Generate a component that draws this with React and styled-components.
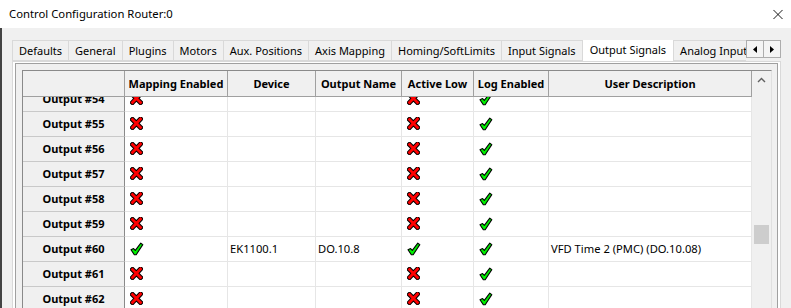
import React from 'react';
import styled, { createGlobalStyle } from 'styled-components';

const Global = createGlobalStyle`
  html, body { margin: 0; padding: 0; background: #f0f0f0; }
  body {
    font-family: "Noto Sans", "Segoe UI", sans-serif;
    font-size: 11px;
    color: #000;
    overflow: hidden;
  }
  * { box-sizing: border-box; }
`;

const Window = styled.div`
  width: 791px;
  height: 308px;
  overflow: hidden;
  background: #f0f0f0;
  display: flex;
  flex-direction: column;
`;

const TitleBar = styled.div`
  height: 28px;
  flex: 0 0 28px;
  background: #fff;
  display: flex;
  align-items: center;
  justify-content: space-between;
  padding: 0 8px 2px 9px;
  font-size: 11.3px;
`;

const CloseBtn = styled.div`
  width: 10px;
  height: 10px;
  margin-top: 2px;
  display: flex;
`;

const Body = styled.div`
  flex: 1;
  position: relative;
  border-left: 2px solid #444;
  padding-top: 12px;
  display: flex;
  flex-direction: column;
`;

const TabStrip = styled.div`
  position: relative;
  z-index: 1;
  height: 21px;
  width: 744px;
  overflow: hidden;
  display: flex;
  align-items: flex-end;
  padding-left: 11px;
`;

const Tab = styled.div`
  flex: 0 0 auto;
  height: ${p => (p.$active ? 24 : 21)}px;
  margin-bottom: ${p => (p.$active ? -1 : 0)}px;
  margin-left: -1px;
  padding: ${p => (p.$active ? '0 7px 3px' : '0 6px 1px')};
  border: 1px solid #d9d9d9;
  border-bottom: ${p => (p.$active ? 'none' : '1px solid #d9d9d9')};
  background: ${p => (p.$active ? '#fff' : '#f0f0f0')};
  display: flex;
  align-items: center;
  white-space: nowrap;
  position: relative;
  z-index: ${p => (p.$active ? 2 : 0)};
`;

const TabScroller = styled.div`
  position: absolute;
  left: 744px;
  top: 12px;
  display: flex;
  z-index: 3;
`;

const ScrollBtn = styled.div`
  width: 18px;
  height: 18px;
  border: 1px solid #adadad;
  background: #f4f4f4;
  display: flex;
  align-items: center;
  justify-content: center;
  margin-left: ${p => (p.$second ? '-1px' : '0')};
`;

const Panel = styled.div`
  margin: 0 10px 0 10px;
  flex: 1;
  border: 1px solid #d9d9d9;
  border-bottom: none;
  background: #fff;
  padding: 1px 2px 0 2px;
  display: flex;
  flex-direction: column;
`;

const GridFrame = styled.div`
  flex: 1;
  border: 1px solid #a0a0a0;
  border-bottom: none;
  background: #f0f0f0;
  padding: 6px 5px 0 6px;
  display: flex;
  flex-direction: column;
`;

const Grid = styled.div`
  flex: 1;
  border-top: 1px solid #8a8a8a;
  border-left: 1px solid #8a8a8a;
  border-right: 1px solid #e0e0e0;
  display: flex;
  overflow: hidden;
`;

const Columns = styled.div`
  width: 729px;
  display: flex;
  flex-direction: column;
  overflow: hidden;
`;

const Row = styled.div`
  display: grid;
  grid-template-columns: 102px 103px 88px 86px 72px 75px 203px;
  height: ${p => (p.$header ? 26 : 25)}px;
  flex: 0 0 auto;
`;

const HeadCell = styled.div`
  background: #f0f0f0;
  border-right: 1px solid #a0a0a0;
  border-bottom: 1px solid #a0a0a0;
  font-weight: 700;
  display: flex;
  align-items: center;
  justify-content: center;
  white-space: nowrap;
  padding-bottom: 1px;
`;

const RowHead = styled.div`
  background: #f0f0f0;
  border-right: 1px solid #8a8a8a;
  border-bottom: 1px solid #c9c9c9;
  font-weight: 700;
  display: flex;
  align-items: center;
  justify-content: center;
  white-space: nowrap;
  padding-bottom: 1px;
`;

const Cell = styled.div`
  background: #fff;
  border-right: 1px solid #e6e6e6;
  border-bottom: 1px solid #e6e6e6;
  display: flex;
  align-items: center;
  padding-left: ${p => (p.$icon ? 5 : 2)}px;
  white-space: nowrap;
  overflow: hidden;
  padding-bottom: 1px;
  font-size: ${p => (p.$icon ? 11 : 11.2)}px;
`;

const BodyView = styled.div`
  flex: 1;
  overflow: hidden;
  display: flex;
  flex-direction: column;
`;

const BodyInner = styled.div`
  margin-top: -10px;
  display: flex;
  flex-direction: column;
`;

const ScrollBar = styled.div`
  width: 18px;
  background: #f0f0f0;
  display: flex;
  flex-direction: column;
  align-items: center;
`;

const ScrollUp = styled.div`
  height: 17px;
  width: 100%;
  display: flex;
  align-items: center;
  justify-content: center;
`;

const Thumb = styled.div`
  margin-top: 137px;
  width: 15px;
  height: 19px;
  background: #cdcdcd;
`;

const RedX = () => (
  <svg width="13" height="13" viewBox="0 0 13 13" style={{ display: 'block' }}>
    <path d="M2.5 2.5 L10.5 10.5 M10.5 2 L2.5 10.5" stroke="#000" strokeWidth="4.8" strokeLinecap="square" fill="none" />
    <path d="M2.5 2.5 L10.5 10.5 M10.5 2 L2.5 10.5" stroke="#f00" strokeWidth="2.8" strokeLinecap="square" fill="none" />
  </svg>
);

const Check = () => (
  <svg width="14" height="14" viewBox="0 0 14 14" style={{ display: 'block' }}>
    <path
      d="M1 7.8 L3.6 6.6 L5.3 8.4 L10.8 1.2 L12.8 2.6 L6.2 12.8 L4.3 12.8 Z"
      fill="#00f000"
      stroke="#000"
      strokeWidth="1.1"
      strokeLinejoin="round"
    />
  </svg>
);

const tabs = [
  'Defaults', 'General', 'Plugins', 'Motors', 'Aux. Positions', 'Axis Mapping',
  'Homing/SoftLimits', 'Input Signals', 'Output Signals', 'Analog Inputs',
];

const headers = ['', 'Mapping Enabled', 'Device', 'Output Name', 'Active Low', 'Log Enabled', 'User Description'];

const rows = [54, 55, 56, 57, 58, 59, 60, 61, 62].map(n =>
  n === 60
    ? { n, map: true, device: 'EK1100.1', name: 'DO.10.8', low: true, log: true, desc: 'VFD Time 2 (PMC) (DO.10.08)' }
    : { n, map: false, device: '', name: '', low: false, log: true, desc: '' }
);

export default function App() {
  return (
    <Window>
      <Global />
      <TitleBar>
        <span>Control Configuration Router:0</span>
        <CloseBtn>
          <svg width="11" height="11" viewBox="0 0 11 11">
            <path d="M0.5 0.5 L10.5 10.5 M10.5 0.5 L0.5 10.5" stroke="#000" strokeWidth="1" />
          </svg>
        </CloseBtn>
      </TitleBar>
      <Body>
        <TabStrip>
          {tabs.map(t => (
            <Tab key={t} $active={t === 'Output Signals'}>{t}</Tab>
          ))}
        </TabStrip>
        <TabScroller>
          <ScrollBtn>
            <svg width="4" height="7" viewBox="0 0 4 7"><path d="M4 0 L0 3.5 L4 7 Z" fill="#000" /></svg>
          </ScrollBtn>
          <ScrollBtn $second>
            <svg width="4" height="7" viewBox="0 0 4 7"><path d="M0 0 L4 3.5 L0 7 Z" fill="#000" /></svg>
          </ScrollBtn>
        </TabScroller>
        <Panel>
          <GridFrame>
            <Grid>
              <Columns>
                <Row $header>
                  {headers.map((h, i) => <HeadCell key={i}>{h}</HeadCell>)}
                </Row>
                <BodyView>
                  <BodyInner>
                    {rows.map(r => (
                      <Row key={r.n}>
                        <RowHead>Output #{r.n}</RowHead>
                        <Cell $icon>{r.map ? <Check /> : <RedX />}</Cell>
                        <Cell>{r.device}</Cell>
                        <Cell>{r.name}</Cell>
                        <Cell $icon>{r.low ? <Check /> : <RedX />}</Cell>
                        <Cell $icon>{r.log ? <Check /> : <RedX />}</Cell>
                        <Cell>{r.desc}</Cell>
                      </Row>
                    ))}
                  </BodyInner>
                </BodyView>
              </Columns>
              <ScrollBar>
                <ScrollUp>
                  <svg width="9" height="6" viewBox="0 0 9 6">
                    <path d="M1 5 L4.5 1.5 L8 5" stroke="#606060" strokeWidth="1.4" fill="none" />
                  </svg>
                </ScrollUp>
                <Thumb />
              </ScrollBar>
            </Grid>
          </GridFrame>
        </Panel>
      </Body>
    </Window>
  );
}
